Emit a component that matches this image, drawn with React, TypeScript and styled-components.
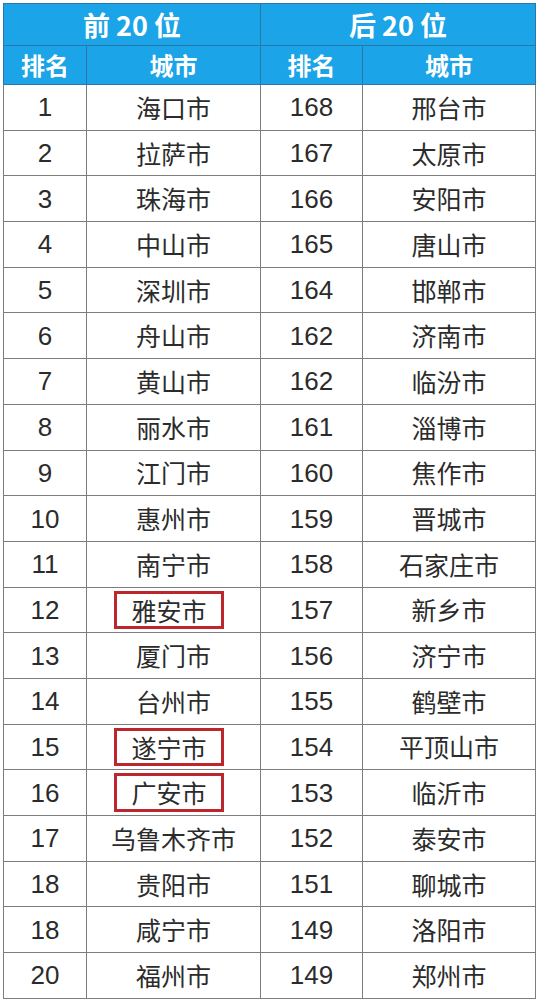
import React from "react";
import styled, { createGlobalStyle } from "styled-components";

const Global = createGlobalStyle`
  html, body { margin: 0; padding: 0; background: #ffffff; }
  body { font-family: "Liberation Sans", "Noto Sans CJK SC", sans-serif; }
`;

const Page = styled.div`
  padding: 3px 5px 0 3px;
  width: 540px;
  box-sizing: border-box;
`;

const Table = styled.table`
  width: 532px;
  border-collapse: collapse;
  table-layout: fixed;
  border: 1px solid #7d7d7d;
`;

const HeadRow = styled.tr<{ $h: number }>`
  height: ${(p) => p.$h}px;
  background: #1ba4e8;
`;

const Th = styled.th<{ $size: number }>`
  color: #ffffff;
  font-family: "Noto Sans CJK SC", "Liberation Sans", sans-serif;
  font-weight: 700;
  font-size: ${(p) => p.$size}px;
  line-height: 1;
  text-align: center;
  padding: 0;
  border: 1px solid #2a78a8;
  white-space: pre;
`;

const Row = styled.tr`
  height: 45.7px;
`;

const Td = styled.td<{ $num?: boolean }>`
  color: #2b2b2b;
  font-family: ${(p) =>
    p.$num
      ? `"Liberation Sans", "Noto Sans CJK SC", sans-serif`
      : `"Noto Sans CJK SC", sans-serif`};
  font-size: ${(p) => (p.$num ? 26 : 25)}px;
  font-weight: 400;
  line-height: 1;
  text-align: center;
  padding: 0;
  border: 1px solid #7d7d7d;
  white-space: nowrap;
`;

const Mark = styled.span`
  display: inline-block;
  border: 3px solid #be262d;
  padding: 3px 14px 2px 14px;
  margin-left: -9px;
  line-height: 1.1;
`;

type R = [string, string, boolean, string, string];

const rows: R[] = [
  ["1", "海口市", false, "168", "邢台市"],
  ["2", "拉萨市", false, "167", "太原市"],
  ["3", "珠海市", false, "166", "安阳市"],
  ["4", "中山市", false, "165", "唐山市"],
  ["5", "深圳市", false, "164", "邯郸市"],
  ["6", "舟山市", false, "162", "济南市"],
  ["7", "黄山市", false, "162", "临汾市"],
  ["8", "丽水市", false, "161", "淄博市"],
  ["9", "江门市", false, "160", "焦作市"],
  ["10", "惠州市", false, "159", "晋城市"],
  ["11", "南宁市", false, "158", "石家庄市"],
  ["12", "雅安市", true, "157", "新乡市"],
  ["13", "厦门市", false, "156", "济宁市"],
  ["14", "台州市", false, "155", "鹤壁市"],
  ["15", "遂宁市", true, "154", "平顶山市"],
  ["16", "广安市", true, "153", "临沂市"],
  ["17", "乌鲁木齐市", false, "152", "泰安市"],
  ["18", "贵阳市", false, "151", "聊城市"],
  ["18", "咸宁市", false, "149", "洛阳市"],
  ["20", "福州市", false, "149", "郑州市"],
];

export default function App() {
  return (
    <>
      <Global />
      <Page>
        <Table>
          <colgroup>
            <col style={{ width: 83 }} />
            <col style={{ width: 174 }} />
            <col style={{ width: 102 }} />
            <col style={{ width: 173 }} />
          </colgroup>
          <thead>
            <HeadRow $h={42}>
              <Th $size={27} colSpan={2}>前 20 位</Th>
              <Th $size={27} colSpan={2}>后 20 位</Th>
            </HeadRow>
            <HeadRow $h={39}>
              <Th $size={24}>排名</Th>
              <Th $size={24}>城市</Th>
              <Th $size={24}>排名</Th>
              <Th $size={24}>城市</Th>
            </HeadRow>
          </thead>
          <tbody>
            {rows.map((r, i) => (
              <Row key={i}>
                <Td $num>{r[0]}</Td>
                <Td>{r[2] ? <Mark>{r[1]}</Mark> : r[1]}</Td>
                <Td $num>{r[3]}</Td>
                <Td>{r[4]}</Td>
              </Row>
            ))}
          </tbody>
        </Table>
      </Page>
    </>
  );
}
